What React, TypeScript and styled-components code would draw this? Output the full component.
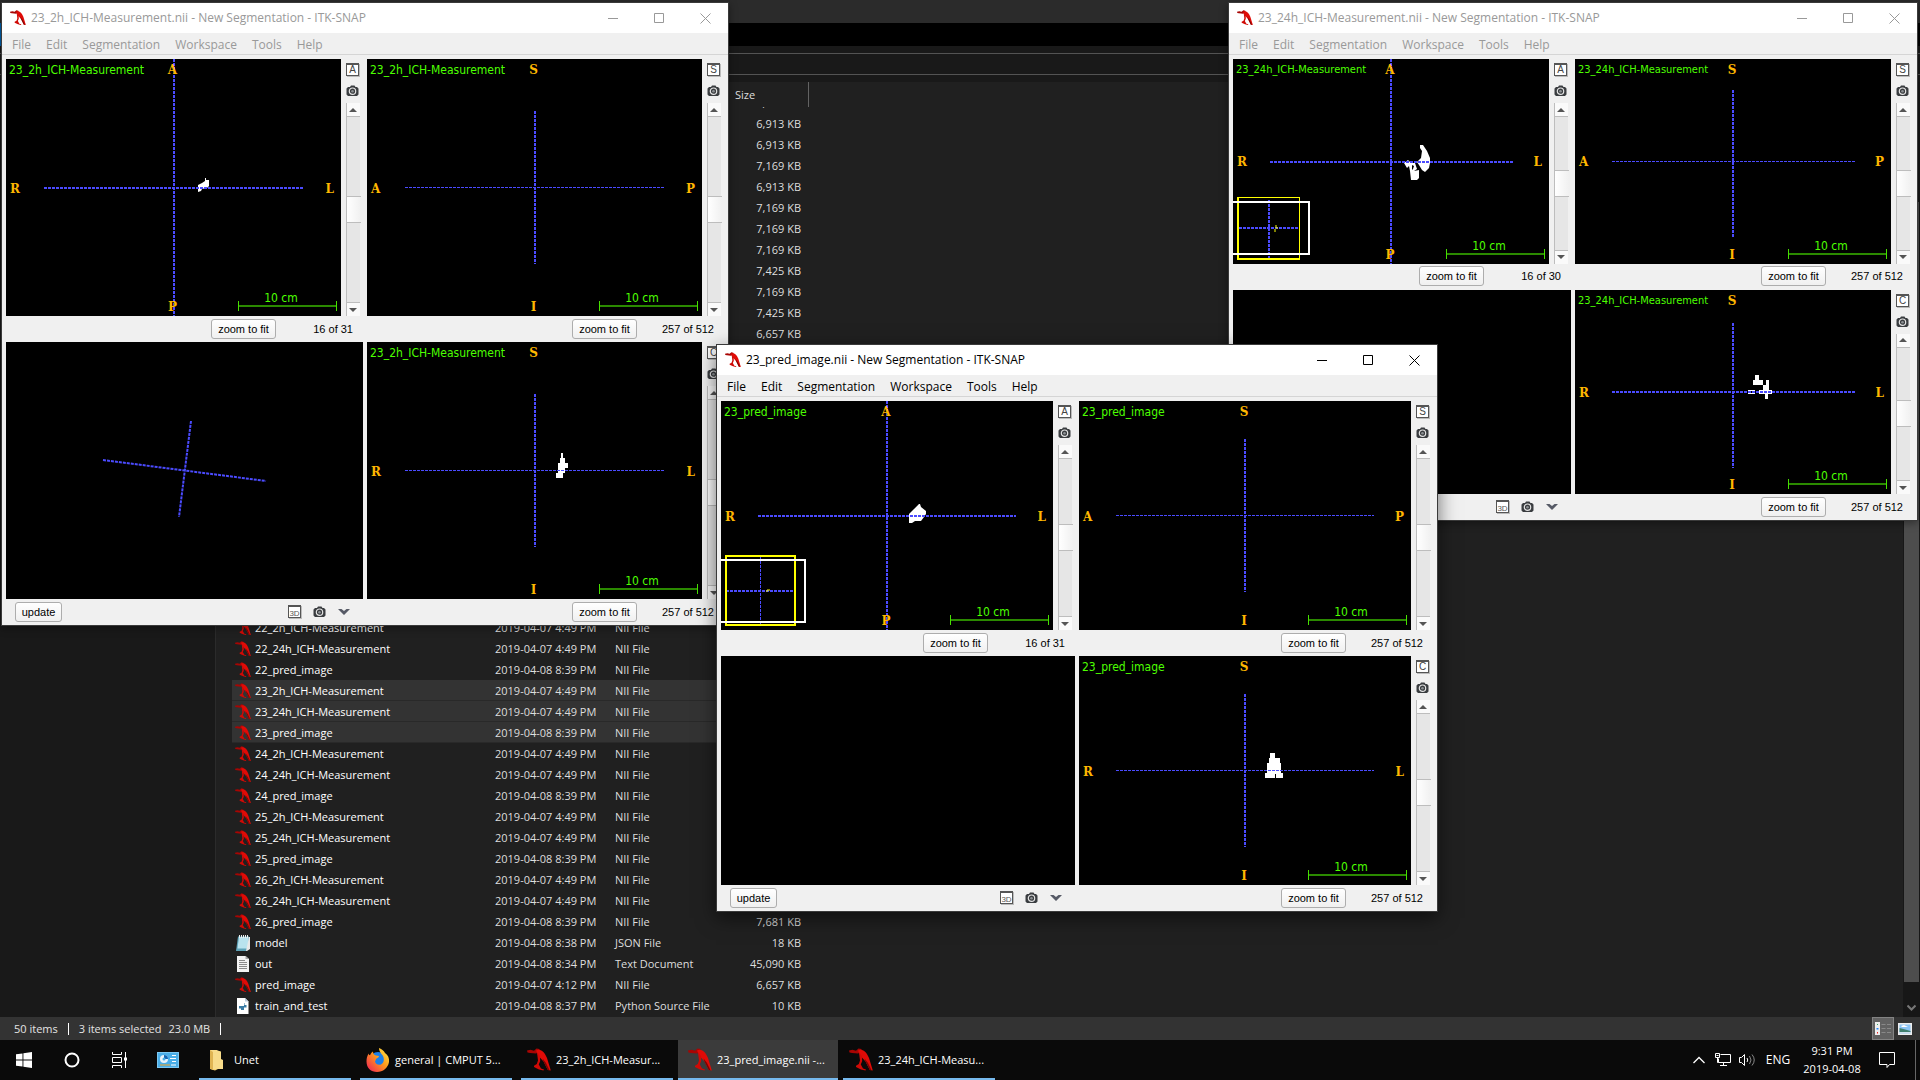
import React from "react";
import styled, { createGlobalStyle, css } from "styled-components";

const GlobalStyle = createGlobalStyle`
  *, *::before, *::after { box-sizing: border-box; }
  body { margin: 0; background: #0a0a0a; overflow: hidden; }
  button { font: inherit; color: inherit; margin: 0; padding: 0; border: 0; background: none; }
  svg { display: block; }
`;

const UI = `"Open Sans", "Noto Sans", sans-serif`;
const BLUE = "#4b4bff";

/* ---------- icons ---------- */

const SnapIcon = ({ size }: { size: number }) => (
  <svg width={size} height={size} viewBox="0 0 24 24" aria-hidden="true">
    <path d="M0 2.500 3.500 1.800 7 2.800 9.500 .500 12.500 1 12.500 4 9 5.500 3 5 .500 4.500Z" fill="#a80503" />
    <path d="M9 2.500C14 0 18 5 20 10L23.800 22.500 20.800 22 16.500 13.500 11.500 8Z" fill="#e00b07" />
    <path d="M15.500 10.500 19 15 22.500 22.300 20.800 22 16.500 13.500Z" fill="#7a0402" />
    <path d="M10 4.500 13 8 13.200 13 11.800 16.500 14 20.500 17 21.500 16.500 22.500 12 21.500 7 19 7 17.800 9.800 16 11 12.500Z" fill="#d00a06" />
  </svg>
);

const CameraIcon = () => (
  <svg width="13" height="12" viewBox="0 0 13 12" aria-hidden="true">
    <path d="M2 2h2l1-1.500h3.500L9.500 2H11l1.500 1.500v6L11 11H2L.5 9.500v-6z" fill="#3a3d40" />
    <circle cx="6.500" cy="6.200" r="3.200" fill="#3a3d40" stroke="#e4e4e4" strokeWidth="1.200" />
    <circle cx="6.500" cy="6.200" r="1.300" fill="#8d9194" />
  </svg>
);

const ChevronIcon = () => (
  <svg width="12" height="8" viewBox="0 0 12 8" aria-hidden="true">
    <path d="M0 1h3.500L6 3l2.500-2H12L6 7z" fill="#565a66" />
  </svg>
);

const Arrow = ({ down }: { down?: boolean }) => (
  <svg width="8" height="4" viewBox="0 0 8 4" aria-hidden="true">
    <path d={down ? "M0 0h8L4 4z" : "M0 4h8L4 0z"} fill="#555" />
  </svg>
);

const NotebookIcon = () => (
  <svg width="16" height="16" viewBox="0 0 16 16" aria-hidden="true">
    <path d="M3 1.500h11V14L11 16H1z" fill="#5fa3b8" />
    <path d="M4 2h9.500v11.500H2.500z" fill="#b9e3ee" />
    <path d="M4.500 0v3M6.500 0v3M8.500 0v3M10.500 0v3M12.500 0v3" stroke="#eee" strokeWidth="1" />
    <path d="M14 2h1v12l-3 2h-1z" fill="#e8e8e8" />
  </svg>
);

const TextIcon = () => (
  <svg width="16" height="16" viewBox="0 0 16 16" aria-hidden="true">
    <path d="M2 0h8.500L14 3v13H2z" fill="#f4f4f4" />
    <path d="M10.500 0v3H14z" fill="#a5a5a5" />
    <path d="M4 4.500h6M4 6.500h8M4 8.500h8M4 10.500h8M4 12.500h8" stroke="#8c8c8c" />
  </svg>
);

const PythonIcon = () => (
  <svg width="16" height="16" viewBox="0 0 16 16" aria-hidden="true">
    <path d="M2 0h8l3.500 3.500V16H2z" fill="#fff" />
    <path d="M10 0v3.500h3.500z" fill="#bcd" />
    <path d="M6 5h3v3H4v2.500h2V12h3V9.500h2.500V7H9.500V5z" fill="#3a7ca5" />
  </svg>
);

const Folder = () => (
  <svg width="24" height="24" viewBox="0 0 24 24" aria-hidden="true">
    <path d="M5 2h7l1 2v17l-3 1.500L5 21z" fill="#f5d273" />
    <path d="M5 2h6l5 1.500V11l2 1v9H5z" fill="#f8dc8a" />
    <path d="M5 2l3 2v18l-3-1.500z" fill="#e0b553" />
  </svg>
);

const Firefox = () => (
  <svg width="24" height="24" viewBox="0 0 24 24" aria-hidden="true">
    <defs>
      <linearGradient id="fox" x1="1" y1="0" x2="0" y2="1">
        <stop offset="0" stopColor="#fff14a" />
        <stop offset=".45" stopColor="#ff9a1c" />
        <stop offset="1" stopColor="#f0195a" />
      </linearGradient>
    </defs>
    <circle cx="12" cy="12" r="8" fill="#1d7fe8" />
    <path d="M13 0c3 1 5 3 6 5 3 2 4.500 5 4 9-1 6-6 10-12 10C5 24 .5 20 .5 13.500c0-3 .7-5.500 2-8 .3 1 .8 1.500 1.500 1.700C5 5 6 4 7 3.500c0 2 1 3.500 3 4l3 .5c0 1.500-2 2-3 3-.6 1 .2 1.500-1 2 0 3 3 4.500 6 3.500 3-1.500 3.500-5 2-8.500-1-2-4-4-4-8z" fill="url(#fox)" />
  </svg>
);

/* ---------- desktop and explorer ---------- */

const Desktop = styled.div`
  position: relative;
  display: flex;
  flex-direction: column;
  width: 100%;
  height: 100vh;
  font: 11px/16px ${UI};
  color: #fff;
  overflow: hidden;
`;

const Explorer = styled.section`
  flex: 1;
  min-height: 0;
  display: flex;
  flex-direction: column;
  background: #202020;
`;

const Caption = styled.div`height: 23px; flex: none; background: #2b2b2b;`;
const RibbonTabs = styled.div`
  height: 23px;
  flex: none;
  background: linear-gradient(90deg, #0063b1 56px, #000 56px);
`;
const AddressArea = styled.div`
  flex: none;
  padding: 7px 0;
  background: #191919;
`;
const AddressBox = styled.div`
  height: 22px;
  border: solid #535353;
  border-width: 1px 0;
`;
const Body = styled.div`flex: 1; min-height: 0; display: flex;`;
const NavPane = styled.nav`
  width: 216px;
  flex: none;
  background: #191919;
  border-right: 1px solid #2b2b2b;
`;
const FilePane = styled.div`flex: 1; min-width: 0; display: flex; flex-direction: column;`;
const ColumnHeader = styled.div`
  flex: none;
  display: flex;
  justify-content: flex-end;
  width: 593px;
  height: 25px;
  color: #dedede;
`;
const HeaderCell = styled.div`
  width: 74px;
  border-right: 1px solid #636363;
  line-height: 26px;
`;
const FileList = styled.div`
  flex: 1;
  min-height: 0;
  display: flex;
  flex-direction: column;
  justify-content: flex-end;
  padding: 0 16px 1px;
  overflow: hidden;
`;
const FileTable = styled.table`
  width: 575px;
  table-layout: fixed;
  border-collapse: collapse;
  color: #dedede;
`;
const FileRow = styled.tr<{ $selected?: boolean }>`
  height: 21px;
  ${(p) => p.$selected && css`background: #333; box-shadow: inset 0 -1px #292929;`}
`;
const Cell = styled.td<{ $w: number; $right?: boolean }>`
  width: ${(p) => p.$w}px;
  padding: 0 ${(p) => (p.$right ? 6 : 0)}px 0 0;
  line-height: 20px;
  white-space: nowrap;
  text-align: ${(p) => (p.$right ? "right" : "left")};
`;
const FileName = styled.div`
  display: flex;
  align-items: center;
  gap: 4px;
  padding-left: 3px;
  color: #fff;
`;
const PageScroll = styled.div`
  width: 17px;
  flex: none;
  display: flex;
  flex-direction: column;
  align-items: center;
  padding: 120px 0 0;
  background: #171717;
`;
const PageThumb = styled.div`flex: 1; width: 15px; background: #4d4d4d;`;
const PageDown = styled.button`height: 35px; padding-top: 16px;`;

const StatusBar = styled.footer`
  flex: none;
  display: flex;
  align-items: center;
  height: 23px;
  padding: 0 4px 0 14px;
  background: #333;
  color: #e4e4e4;
`;
const StatusText = styled.span<{ $gap: number }>`margin-right: ${(p) => p.$gap}px; white-space: pre;`;
const Divider = styled.span`width: 1px; height: 12px; margin-right: 10px; background: #fff;`;
const ViewButton = styled.button<{ $on?: boolean }>`
  display: grid;
  place-items: center;
  width: 22px;
  height: 23px;
  ${(p) => p.$on && css`background: #626262; border: 1px solid #838383;`}
`;
const Spacer = styled.span`flex: 1;`;

/* ---------- taskbar ---------- */

const Taskbar = styled.footer`
  flex: none;
  display: flex;
  height: 40px;
  background: #0a0a0a;
  font-size: 12px;
`;
const SystemButton = styled.button`
  display: grid;
  place-items: center;
  width: 48px;
`;
const Tasks = styled.div`display: flex; gap: 1px; padding-left: 3px;`;
const Task = styled.button<{ $active?: boolean }>`
  display: flex;
  align-items: center;
  gap: 5px;
  width: 160px;
  padding: 0 10px;
  font-size: 11px;
  position: relative;
  background: ${(p) => (p.$active ? "#3b3b3b" : "transparent")};
  &::after {
    content: "";
    position: absolute;
    bottom: 0;
    left: ${(p) => (p.$active ? 0 : 4)}px;
    right: ${(p) => (p.$active ? 0 : 4)}px;
    height: 2px;
    background: #76b9ed;
  }
`;
const TaskLabel = styled.span`white-space: nowrap;`;
const Tray = styled.div`
  display: flex;
  align-items: center;
  margin-left: auto;
  padding-right: 4px;
  font-size: 12px;
`;
const TrayButton = styled.button`
  display: grid;
  place-items: center;
  width: 24px;
  height: 40px;
`;
const Lang = styled.button`width: 38px;`;
const Clock = styled.div`
  width: 70px;
  text-align: center;
  font-size: 11px;
  line-height: 18px;
  margin-right: 8px;
`;
const ShowDesktop = styled.div`width: 1px; height: 40px; margin-left: 16px; background: #666;`;

/* ---------- viewer windows ---------- */

const Frame = styled.section<{ $x: number; $y: number; $w: number; $h: number; $active?: boolean }>`
  position: absolute;
  left: ${(p) => p.$x}px;
  top: ${(p) => p.$y}px;
  width: ${(p) => p.$w}px;
  height: ${(p) => p.$h}px;
  display: flex;
  flex-direction: column;
  border: 1px solid #3a3a3a;
  background: #f0f0f0;
  color: #000;
  --chrome: ${(p) => (p.$active ? "#000" : "#999")};
  box-shadow: ${(p) => (p.$active ? "0 6px 18px rgba(0,0,0,.55)" : "0 2px 8px rgba(0,0,0,.4)")};
`;
const TitleBar = styled.header`
  flex: none;
  display: flex;
  align-items: center;
  height: 30px;
  padding-left: 8px;
  background: #fff;
  color: var(--chrome);
`;
const Title = styled.h1`
  flex: 1;
  margin: 0;
  padding-left: 5px;
  font: 12px/30px ${UI};
  white-space: nowrap;
`;
const CaptionButton = styled.button`
  display: grid;
  place-items: center;
  width: 46px;
  height: 30px;
`;
const MenuBar = styled.nav`
  flex: none;
  display: flex;
  gap: 15px;
  height: 22px;
  padding: 2px 0 0 10px;
  border-bottom: 1px solid #d5d5d5;
  color: var(--chrome);
  font-size: 12px;
`;
const Grid = styled.div`
  flex: 1;
  min-height: 0;
  display: grid;
  grid-template: 1fr 1fr / 1fr 1fr;
  column-gap: 4px;
  padding: 4px 4px 0;
`;
const Pane = styled.div`display: flex; flex-direction: column; min-width: 0; min-height: 0;`;
const PaneMain = styled.div`flex: 1; min-height: 0; display: flex;`;
const Canvas = styled.div`
  position: relative;
  flex: 1;
  min-width: 0;
  background: #000;
  overflow: hidden;
`;
const Scene = styled.svg`width: 100%; height: 100%;`;
const Layer = styled.span<{ $small?: boolean }>`
  position: absolute;
  left: 3px;
  top: 3px;
  font: ${(p) => (p.$small ? 11 : 12)}px/16px "DejaVu Sans Condensed", "DejaVu Sans", sans-serif;
  color: #4dff00;
`;
const Compass = styled.span<{ $side: "t" | "b" | "l" | "r" }>`
  position: absolute;
  font: bold 12px/14px "DejaVu Serif", serif;
  color: #ffb800;
  ${(p) => p.$side === "t" && css`top: 4px; left: 0; right: 2px; text-align: center;`}
  ${(p) => p.$side === "b" && css`bottom: 2px; left: 0; right: 2px; text-align: center;`}
  ${(p) => p.$side === "l" && css`left: 4px; top: calc(50% - 6px);`}
  ${(p) => p.$side === "r" && css`right: 7px; top: calc(50% - 6px);`}
`;
const Ruler = styled.div`
  position: absolute;
  right: 4px;
  bottom: 5px;
  width: 99px;
  height: 10px;
  border: solid #46e000;
  border-width: 0 1px;
  background: linear-gradient(#2b8a00, #2b8a00) center / 100% 2px no-repeat;
`;
const RulerText = styled.span`
  position: absolute;
  right: 16px;
  bottom: 10px;
  width: 88px;
  text-align: center;
  font: 12px/16px "DejaVu Sans Condensed", "DejaVu Sans", sans-serif;
  color: #4dff00;
`;
const SideBar = styled.aside`
  width: 22px;
  flex: none;
  display: flex;
  flex-direction: column;
  padding: 4px 3px 0 5px;
`;
const Badge = styled.button`
  flex: none;
  width: 13px;
  height: 13px;
  border: 1px solid #555;
  border-top-width: 2px;
  background: #fff;
  color: #444;
  font: 10px/10px "Liberation Sans", Arial, sans-serif;
  text-align: center;
  box-shadow: 1px 1px #bbb;
`;
const IconButton = styled.button`display: block; height: 27px; padding: 9px 0 6px; flex: none;`;
const ScrollButton = styled.button<{ $down?: boolean }>`
  display: grid;
  place-items: center;
  flex: none;
  width: 14px;
  height: 14px;
  padding-right: 1px;
  background: #fafafa;
  border: solid #bdbdbd;
  border-width: ${(p) => (p.$down ? "1px 0 0 1px" : "0 0 1px 1px")};
`;
const SliceSlider = styled.input`
  flex: 1;
  min-height: 0;
  width: 14px;
  margin: 0;
  appearance: none;
  writing-mode: vertical-lr;
  background: #e6e6e6;
  border-left: 1px solid #bdbdbd;
  &::-webkit-slider-thumb {
    appearance: none;
    width: 14px;
    height: 27px;
    background: linear-gradient(90deg, #fff, #f0f0f0);
    border: solid #bdbdbd;
    border-width: 1px 0;
  }
`;
const PaneFooter = styled.div`
  flex: none;
  display: flex;
  align-items: center;
  height: 26px;
  padding: 0 10px 1px 9px;
  font-family: "Liberation Sans", Arial, sans-serif;
`;
const PushButton = styled.button<{ $w: number }>`
  width: ${(p) => p.$w}px;
  height: 20px;
  border: 1px solid #adadad;
  border-radius: 3px;
  background: linear-gradient(#fff, #f0f0f0);
  line-height: 18px;
`;
const SliceText = styled.span`width: 77px; text-align: right; white-space: nowrap;`;
const FooterIcons = styled.div`display: flex; align-items: center; gap: 12px; padding-right: 3px;`;

const Cross = ({ v, h, thickV = 2, thickH = 2 }: { v: number[]; h: number[]; thickV?: number; thickH?: number }) => (
  <g stroke={BLUE} strokeDasharray="3 1" shapeRendering="crispEdges">
    <line x1={v[0]} y1={v[1]} x2={v[0]} y2={v[2]} strokeWidth={thickV} />
    <line x1={h[1]} y1={h[0]} x2={h[2]} y2={h[0]} strokeWidth={thickH} />
  </g>
);

type ViewProps = {
  layer: string;
  small?: boolean;
  axis: string;
  marks: string;
  slice: string;
  children: React.ReactNode;
};

function SliceView({ layer, small, axis, marks, slice, children }: ViewProps) {
  return (
    <Pane>
      <PaneMain>
        <Canvas>
          <Scene>{children}</Scene>
          <Layer $small={small}>{layer}</Layer>
          <Compass $side="t">{marks[0]}</Compass>
          <Compass $side="b">{marks[1]}</Compass>
          <Compass $side="l">{marks[2]}</Compass>
          <Compass $side="r">{marks[3]}</Compass>
          <RulerText>10 cm</RulerText>
          <Ruler />
        </Canvas>
        <SideBar>
          <Badge>{axis}</Badge>
          <IconButton aria-label="Save screenshot"><CameraIcon /></IconButton>
          <ScrollButton aria-label="Next slice"><Arrow /></ScrollButton>
          <SliceSlider type="range" aria-label="Slice" defaultValue={50} />
          <ScrollButton aria-label="Previous slice" $down><Arrow down /></ScrollButton>
        </SideBar>
      </PaneMain>
      <PaneFooter>
        <Spacer />
        <PushButton $w={65}>zoom to fit</PushButton>
        <SliceText>{slice}</SliceText>
      </PaneFooter>
    </Pane>
  );
}

const RenderView = ({ children }: { children?: React.ReactNode }) => (
  <Pane>
    <PaneMain>
      <Canvas><Scene>{children}</Scene></Canvas>
    </PaneMain>
    <PaneFooter>
      <PushButton $w={47}>update</PushButton>
      <Spacer />
      <FooterIcons>
        <Badge aria-label="3D view">
          <svg width="11" height="9" viewBox="0 0 11 9"><text x="5.500" y="8" fontSize="8" textAnchor="middle" fill="#555" fontFamily="Liberation Sans, sans-serif">3D</text></svg>
        </Badge>
        <button aria-label="Save screenshot"><CameraIcon /></button>
        <button aria-label="More"><ChevronIcon /></button>
      </FooterIcons>
    </PaneFooter>
  </Pane>
);

type WindowProps = { x: number; y: number; w: number; h: number; active?: boolean; title: string; children: React.ReactNode };

const SnapWindow = ({ x, y, w, h, active, title, children }: WindowProps) => (
  <Frame $x={x} $y={y} $w={w} $h={h} $active={active}>
    <TitleBar>
      <SnapIcon size={16} />
      <Title>{title}</Title>
      <CaptionButton aria-label="Minimize">
        <svg width="10" height="10"><path d="M0 5.500h10" stroke="currentColor" /></svg>
      </CaptionButton>
      <CaptionButton aria-label="Maximize">
        <svg width="11" height="11"><path d="M.5.5h9v9h-9z" fill="none" stroke="currentColor" /></svg>
      </CaptionButton>
      <CaptionButton aria-label="Close">
        <svg width="11" height="11"><path d="M.5.5l10 10M10.500.5l-10 10" stroke="currentColor" /></svg>
      </CaptionButton>
    </TitleBar>
    <MenuBar>
      {["File", "Edit", "Segmentation", "Workspace", "Tools", "Help"].map((m) => (
        <button key={m}>{m}</button>
      ))}
    </MenuBar>
    <Grid>{children}</Grid>
  </Frame>
);

/* ---------- data ---------- */

type Entry = { name?: string; date?: string; type?: string; size?: string; kind?: "model" | "out" | "py"; selected?: boolean };

const sizes = ["6,913", "6,913", "6,913", "7,169", "6,913", "7,169", "7,169", "7,169", "7,425", "7,169", "7,425", "6,657"];
const scans: Entry[] = ["22", "23", "24", "25", "26"].flatMap((n) =>
  ["2h_ICH-Measurement", "24h_ICH-Measurement", "pred_image"].map((s) => ({
    name: `${n}_${s}`,
    date: s === "pred_image" ? "2019-04-08 8:39 PM" : "2019-04-07 4:49 PM",
    type: "NII File",
    selected: n === "23",
    size: n === "26" && s === "pred_image" ? "7,681 KB" : undefined,
  }))
);
const files: Entry[] = [
  ...sizes.map((s) => ({ size: `${s} KB` })),
  ...Array.from({ length: 13 }, () => ({})),
  ...scans,
  { name: "model", date: "2019-04-08 8:38 PM", type: "JSON File", size: "18 KB", kind: "model" },
  { name: "out", date: "2019-04-08 8:34 PM", type: "Text Document", size: "45,090 KB", kind: "out" },
  { name: "pred_image", date: "2019-04-07 4:12 PM", type: "NII File", size: "6,657 KB" },
  { name: "train_and_test", date: "2019-04-08 8:37 PM", type: "Python Source File", size: "10 KB", kind: "py" },
];

const FileIcon = ({ kind }: { kind?: Entry["kind"] }) =>
  kind === "model" ? <NotebookIcon /> : kind === "out" ? <TextIcon /> : kind === "py" ? <PythonIcon /> : <SnapIcon size={16} />;

export default function App() {
  return (
    <Desktop>
      <GlobalStyle />
      <Explorer>
        <Caption />
        <RibbonTabs />
        <AddressArea><AddressBox /></AddressArea>
        <Body>
          <NavPane />
          <FilePane>
            <ColumnHeader><HeaderCell>Size</HeaderCell></ColumnHeader>
            <FileList>
              <FileTable>
                <tbody>
                  {files.map((f, i) => (
                    <FileRow key={i} $selected={f.selected}>
                      <Cell $w={263}>{f.name && <FileName><FileIcon kind={f.kind} />{f.name}</FileName>}</Cell>
                      <Cell $w={120}>{f.date}</Cell>
                      <Cell $w={120}>{f.type}</Cell>
                      <Cell $w={72} $right>{f.size}</Cell>
                    </FileRow>
                  ))}
                </tbody>
              </FileTable>
            </FileList>
          </FilePane>
          <PageScroll>
            <PageThumb />
            <PageDown aria-label="Scroll down">
              <svg width="9" height="8"><path d="M.5 1.500l4 4 4-4" fill="none" stroke="#777" strokeWidth="2" /></svg>
            </PageDown>
          </PageScroll>
        </Body>
        <StatusBar>
          <StatusText $gap={10}>50 items</StatusText>
          <Divider />
          <StatusText $gap={7}>3 items selected</StatusText>
          <StatusText $gap={10}>23.0 MB</StatusText>
          <Divider />
          <Spacer />
          <ViewButton aria-label="Details view" $on>
            <svg width="16" height="14" viewBox="0 0 16 14">
              <path d="M0 0h5v13H0z" fill="#eee" />
              <path d="M2 2h1v1H2z" fill="#3a6" /><path d="M1.500 6h2v1.500h-2z" fill="#28f" /><path d="M2 10h1v1.500H2z" fill="#e22" />
              <path d="M6.500 2.500h4M12 2.500h4M6.500 6.500h4M12 6.500h4M6.500 10.500h4M12 10.500h4" stroke="#888" />
            </svg>
          </ViewButton>
          <ViewButton aria-label="Large icons view">
            <svg width="14" height="12" viewBox="0 0 14 12">
              <path d="M0 0h14v12H0z" fill="#eee" />
              <path d="M1.500 1.500h11v9h-11z" fill="#8cc4f5" />
              <path d="M3 3l3-1 4 2h-6z" fill="#fff" />
              <path d="M1.500 5l4 1 7 2v1h-11z" fill="#3f7f6e" />
              <path d="M1.500 9h11v1.500h-11z" fill="#cfe0ee" />
            </svg>
          </ViewButton>
        </StatusBar>
      </Explorer>

      <Taskbar>
        <SystemButton aria-label="Start">
          <svg width="16" height="16" viewBox="0 0 16 16"><path d="M0 2.300 6.500 1.400v6.100H0zM7.400 1.300 16 0v7.500H7.400zM0 8.400h6.500v6.200L0 13.700zM7.400 8.400H16V16l-8.600-1.200z" fill="#fff" /></svg>
        </SystemButton>
        <SystemButton aria-label="Cortana">
          <svg width="16" height="16"><circle cx="8" cy="8" r="6.500" fill="none" stroke="#fff" strokeWidth="2" /></svg>
        </SystemButton>
        <SystemButton aria-label="Task view">
          <svg width="18" height="16" viewBox="0 0 18 16" fill="none" stroke="#fff"><path d="M1.500 0v2.500h9V0M1.500 5.500h9v5h-9zM1.500 16v-2.500h9V16M14.500 0v16" /><path d="M13 5.500h3v3h-3z" fill="#fff" stroke="none" /></svg>
        </SystemButton>
        <SystemButton aria-label="Control panel">
          <svg width="22" height="16" viewBox="0 0 22 16">
            <path d="M0 0h22v16H0z" fill="#7cc8f2" /><path d="M1 1h20v14H1z" fill="#4aaee8" />
            <circle cx="7" cy="7" r="4" fill="#e8f4fb" /><path d="M7 7V3a4 4 0 0 1 4 4z" fill="#1567b5" /><circle cx="7" cy="7" r="1.500" fill="#4aaee8" />
            <path d="M15 3.500h4M13 6.500h6M15 9.500h4" stroke="#fff" /><path d="M3 13h10" stroke="#f5a623" /><path d="M14 13h5" stroke="#fff" />
          </svg>
        </SystemButton>
        <Tasks>
          <Task><Folder /><TaskLabel>Unet</TaskLabel></Task>
          <Task><Firefox /><TaskLabel>general | CMPUT 5...</TaskLabel></Task>
          <Task><SnapIcon size={24} /><TaskLabel>23_2h_ICH-Measur...</TaskLabel></Task>
          <Task $active><SnapIcon size={24} /><TaskLabel>23_pred_image.nii -...</TaskLabel></Task>
          <Task><SnapIcon size={24} /><TaskLabel>23_24h_ICH-Measu...</TaskLabel></Task>
        </Tasks>
        <Tray>
          <TrayButton aria-label="Show hidden icons">
            <svg width="12" height="8"><path d="M.5 7l5.500-5.500L11.500 7" fill="none" stroke="#fff" strokeWidth="1.300" /></svg>
          </TrayButton>
          <TrayButton aria-label="Network">
            <svg width="16" height="14" viewBox="0 0 16 14" fill="none" stroke="#fff"><path d="M5.500 1.500h10v8h-12v-4M.5.500h4v4h-4zM8.500 9.500v3M5 12.500h7M1.500 2.500h2M2.500 4.500v5h1" /></svg>
          </TrayButton>
          <TrayButton aria-label="Volume">
            <svg width="17" height="14" viewBox="0 0 17 14" fill="none" stroke="#fff"><path d="M.5 4.500h2l3-3v11l-3-3h-2zM8 5q1.500 2 0 4" /><path d="M10.500 3q3 4 0 8M13 1.500q4.500 5.500 0 11" stroke="#888" /></svg>
          </TrayButton>
          <Lang>ENG</Lang>
          <Clock>9:31 PM<br />2019-04-08</Clock>
          <TrayButton aria-label="Notifications">
            <svg width="16" height="16" viewBox="0 0 16 16"><path d="M.5.500h15v12h-5l-2.500 3v-3H.5z" fill="none" stroke="#fff" /></svg>
          </TrayButton>
          <ShowDesktop />
        </Tray>
      </Taskbar>

      <SnapWindow x={1} y={2} w={728} h={624} title="23_2h_ICH-Measurement.nii - New Segmentation - ITK-SNAP">
        <SliceView layer="23_2h_ICH-Measurement" axis="A" marks="APRL" slice="16 of 31">
          <path d="M199 119h1v2h3v6l-2 2-5 1-1 2-3 1v-7l4-2 3-2z" fill="#fff" />
          <Cross v={[168, 0, 257]} h={[129, 38, 297]} />
        </SliceView>
        <SliceView layer="23_2h_ICH-Measurement" axis="S" marks="SIAP" slice="257 of 512">
          <Cross v={[168, 52, 205]} h={[128.5, 38, 297]} thickH={1} />
        </SliceView>
        <RenderView>
          <g stroke={BLUE} strokeWidth="2" strokeDasharray="3 1"><path d="M97 118L260 139M185 79L173 175" /></g>
        </RenderView>
        <SliceView layer="23_2h_ICH-Measurement" axis="C" marks="SIRL" slice="257 of 512">
          <path d="M194 111h2v5h2v5h3v5h-3v5h-2v5h-7v-5h2v-10h2v-5h1z" fill="#fff" />
          <Cross v={[168, 52, 205]} h={[128.5, 38, 297]} thickH={1} />
        </SliceView>
      </SnapWindow>

      <SnapWindow x={1228} y={2} w={690} h={519} title="23_24h_ICH-Measurement.nii - New Segmentation - ITK-SNAP">
        <SliceView small layer="23_24h_ICH-Measurement" axis="A" marks="APRL" slice="16 of 30">
          <path d="M187 86h3l4 6 3 7v5l-1 5-4 4-3-2-3-5-2-3 4-4 1-7-2-3zM171 104l4-3 2 2 1 1h4l2 6-3 2 5-1v8l-2 2h-6l-1-9-1-5-2 2z" fill="#fff" />
          <path d="M179 106l2 1-1 3-1 1z" fill="#000" />
          <Cross v={[158, 0, 205]} h={[103, 37, 280]} />
          <Cross v={[36, 141, 200]} h={[169, 6, 66]} />
          <path d="M4 138.500h62v62" fill="none" stroke="#ff0" shapeRendering="crispEdges" />
          <path d="M5 138v62M4 200h62" stroke="#ff0" strokeWidth="2" />
          <path d="M0 143h76v52H0" fill="none" stroke="#fff" strokeWidth="2" />
          <path d="M43 166v3M42 170v3M44 168v2" stroke="#ff0" />
        </SliceView>
        <SliceView small layer="23_24h_ICH-Measurement" axis="S" marks="SIAP" slice="257 of 512">
          <Cross v={[158, 31, 179]} h={[102.5, 37, 280]} thickH={1} />
        </SliceView>
        <RenderView />
        <SliceView small layer="23_24h_ICH-Measurement" axis="C" marks="SIRL" slice="257 of 512">
          <path d="M180 85h4v5h4v5h-10v-5h2zM191 90h3v10h3v4h-4v5h-3v-5h-6v-4h4v-5h3zM173 100h7v1h-7zM173 103h7v1h-7z" fill="#fff" />
          <Cross v={[158, 33, 178]} h={[102, 37, 280]} />
        </SliceView>
      </SnapWindow>

      <SnapWindow x={716} y={344} w={722} h={568} active title="23_pred_image.nii - New Segmentation - ITK-SNAP">
        <SliceView layer="23_pred_image" axis="A" marks="APRL" slice="16 of 31">
          <path d="M198 103h1l1 3 5 4v3l-2 3-3 4h-6l-3 2h-3v-9l4-4z" fill="#fff" />
          <Cross v={[166, 0, 229]} h={[115, 37, 295]} />
          <Cross v={[39.5, 156, 223]} h={[190, 5, 74]} thickV={1} />
          <path d="M5 155h69v69H5z" fill="none" stroke="#ff0" strokeWidth="2" />
          <path d="M0 159h84v62H0" fill="none" stroke="#fff" strokeWidth="2" />
          <path d="M46 189h3M45 190h2" stroke="#ff0" />
        </SliceView>
        <SliceView layer="23_pred_image" axis="S" marks="SIAP" slice="257 of 512">
          <Cross v={[166, 38, 191]} h={[114.5, 37, 295]} thickH={1} />
        </SliceView>
        <RenderView />
        <SliceView layer="23_pred_image" axis="C" marks="SIRL" slice="257 of 512">
          <path d="M191 97h5v5h5v5h1v10h2v5h-7v-4h-1v4h-10v-5h2v-10h2v-5h1z" fill="#fff" />
          <Cross v={[166, 38, 191]} h={[114.5, 37, 295]} thickH={1} />
        </SliceView>
      </SnapWindow>
    </Desktop>
  );
}
